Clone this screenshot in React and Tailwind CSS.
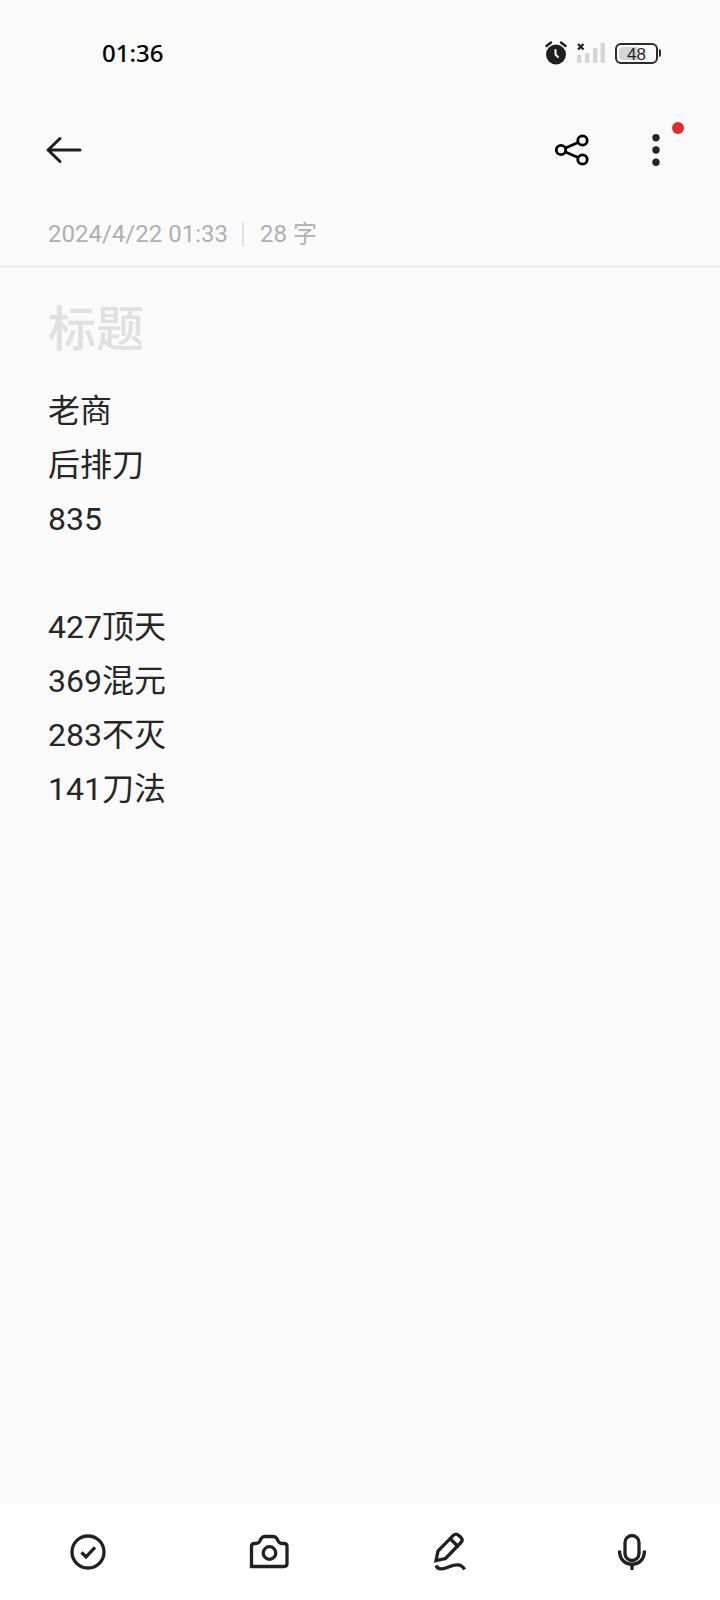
const BODY_TEXT = `老商
后排刀
835

427顶天
369混元
283不灭
141刀法`;

function AlarmIcon() {
  return (
    <svg width="22" height="24" viewBox="0 0 22 24" fill="none" aria-label="Alarm on">
      <circle cx="11" cy="13.5" r="10" fill="#1f1f1f" />
      <path d="M1.5 5L6 1.5M20.5 5L16 1.5" stroke="#1f1f1f" strokeWidth="2.4" strokeLinecap="round" />
      <path d="M10.5 9V13.5L13 16" stroke="#fff" strokeWidth="2" strokeLinecap="round" strokeLinejoin="round" />
    </svg>
  );
}

function SignalIcon() {
  return (
    <svg width="28" height="20" viewBox="0 0 28 20" aria-label="No signal">
      <g fill="#d6d6d6">
        <rect x="0" y="12" width="4.5" height="8" rx="0.5" />
        <rect x="8" y="10" width="4.5" height="10" rx="0.5" />
        <rect x="16" y="5" width="4.5" height="15" rx="0.5" />
        <rect x="23.5" y="0" width="4.5" height="20" rx="0.5" />
      </g>
      <path d="M1 1L6.5 6.5M6.5 1L1 6.5" stroke="#1f1f1f" strokeWidth="2.2" />
    </svg>
  );
}

function Battery({ level }) {
  return (
    <div className="flex items-center gap-px">
      <div className="relative flex h-[21px] w-[43px] items-center justify-center overflow-hidden rounded-md border-2 border-[#2b2b2b]">
        <div className="absolute inset-y-0.5 left-0.5 rounded-l-sm bg-[#d4d4d4]" style={{ width: `${level}%` }} />
        <span className="relative pt-0.5 font-['Liberation_Sans',sans-serif] text-[17px] leading-none text-[#1f1f1f]">{level}</span>
      </div>
      <div className="h-2 w-0.5 rounded-r-sm bg-[#2b2b2b]" />
    </div>
  );
}

function StatusBar() {
  return (
    <div className="flex h-[106px] items-center justify-between pr-[59px] pl-[102px]">
      <span className="font-['Noto_Sans',sans-serif] text-2xl font-medium text-black">01:36</span>
      <div className="flex items-center gap-2.5">
        <AlarmIcon />
        <SignalIcon />
        <Battery level={48} />
      </div>
    </div>
  );
}

function Header() {
  return (
    <header className="flex h-22 items-center justify-between px-10">
      <button type="button" aria-label="Back" className="flex size-12 items-center justify-center">
        <svg width="48" height="48" viewBox="0 0 48 48" fill="none" stroke="#1f1f1f" strokeWidth="3" strokeLinecap="round" strokeLinejoin="round">
          <path d="M20 12.5L8 24L20 35.5M8 24H40" />
        </svg>
      </button>
      <div className="flex items-center gap-9">
        <button type="button" aria-label="Share" className="flex size-12 items-center justify-center">
          <svg width="48" height="48" viewBox="0 0 48 48" fill="none" stroke="#000" strokeWidth="2.8">
            <circle cx="13" cy="24" r="4.7" />
            <circle cx="34.5" cy="14.5" r="4.7" />
            <circle cx="34.5" cy="33.5" r="4.7" />
            <path d="M17.5 22L30 16.5M17.5 26L30 31.5" />
          </svg>
        </button>
        <button type="button" aria-label="More" className="relative flex size-12 items-center justify-center">
          <svg width="48" height="48" viewBox="0 0 48 48" fill="#262626">
            <circle cx="24" cy="11.7" r="3.7" />
            <circle cx="24" cy="24" r="3.7" />
            <circle cx="24" cy="36.3" r="3.7" />
          </svg>
          <span className="absolute -top-1 -right-1 size-3 rounded-full bg-[#e32d2b]" />
        </button>
      </div>
    </header>
  );
}

const TOOLS = [
  {
    name: "Checklist",
    icon: (
      <>
        <circle cx="24" cy="24" r="16" />
        <path d="M17.5 24.3L22 28.8L31 19.3" strokeLinecap="butt" strokeLinejoin="miter" />
      </>
    ),
  },
  {
    name: "Camera",
    icon: (
      <>
        <path d="M6.5 38.500V18.5Q6.5 15.5 9.5 15.5H11Q13.5 15.5 14.7 13.3L16.3 10.3Q17.5 8.5 19.5 8.5H28.5Q30.5 8.5 31.7 10.3L33.3 13.3Q34.5 15.5 37 15.5H39Q42 15.5 42 18.5V35.5Q42 38.5 39 38.5Z" strokeLinejoin="miter" />
        <circle cx="24.5" cy="25" r="6.3" />
      </>
    ),
  },
  {
    name: "Draw",
    icon: (
      <>
        <path d="M9 32.5L11 23L26.5 7.2Q29 5 31.5 7.2L34 9.5Q36.3 12 34 14.5L18.5 30.5Z" strokeLinejoin="miter" />
        <path d="M23.5 11L30.5 18" />
        <path d="M9 37.5C11 42 16 41.5 21.5 39C28.5 36 35 36 37.5 41.5" strokeLinecap="butt" />
      </>
    ),
  },
  {
    name: "Record",
    icon: (
      <>
        <rect x="17" y="7.5" width="14" height="25" rx="7" />
        <path d="M11.5 22.5C11.5 31.5 17 36.2 24 36.2C31 36.2 36.5 31.5 36.5 22.5M24 36.2V42" strokeLinecap="butt" />
      </>
    ),
  },
];

function Toolbar() {
  return (
    <nav className="flex h-24 items-center justify-between bg-white px-16">
      {TOOLS.map((tool) => (
        <button key={tool.name} type="button" aria-label={tool.name} className="size-12">
          <svg width="48" height="48" viewBox="0 0 48 48" fill="none" stroke="#212121" strokeWidth="3.3" strokeLinecap="round" strokeLinejoin="round">
            {tool.icon}
          </svg>
        </button>
      ))}
    </nav>
  );
}

export default function App() {
  return (
    <div className="flex min-h-screen flex-col bg-[#fafafa] font-[Roboto,'Noto_Sans_CJK_SC',sans-serif] text-[#262626]">
      <StatusBar />
      <Header />
      <div className="flex h-[73px] items-center border-b border-[#e2e2e2] px-12 pt-2 text-2xl text-[#b0b0b0]">
        <time>2024/4/22 01:33</time>
        <span className="mr-4 ml-3.5 h-6 w-0.5 bg-[#e2e2e2]" />
        <span>28 字</span>
      </div>
      <main className="flex flex-1 flex-col px-12 pt-[26px]">
        <input
          type="text"
          aria-label="标题"
          placeholder="标题"
          className="h-[72px] w-full bg-transparent text-5xl font-medium outline-none placeholder:text-[#e0e0e0]"
        />
        <textarea
          aria-label="正文"
          defaultValue={BODY_TEXT}
          className="mt-[19px] w-full flex-1 resize-none bg-transparent text-[32px] leading-[54px] outline-none"
        />
      </main>
      <Toolbar />
    </div>
  );
}
